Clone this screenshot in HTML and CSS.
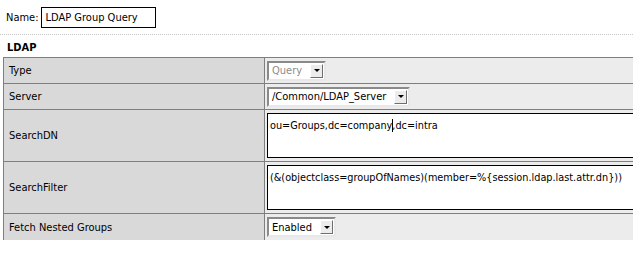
FILE: index.html
```html
<!DOCTYPE html>
<html>
<head>
<meta charset="utf-8">
<link rel="stylesheet" href="styles.css">
</head>
<body>
<div class="name-row">
  <span class="name-label">Name:</span>
  <span class="name-input">LDAP Group Query</span>
</div>
<div class="sep"></div>
<div class="section-title">LDAP</div>
<table class="props">
  <tr class="row-short">
    <td class="label">Type</td>
    <td class="value">
      <span class="select disabled"><span class="select-text">Query</span><span class="select-btn"><span class="arrow"></span></span></span>
    </td>
  </tr>
  <tr class="row-short">
    <td class="label">Server</td>
    <td class="value">
      <span class="select"><span class="select-text">/Common/LDAP_Server</span><span class="select-btn"><span class="arrow"></span></span></span>
    </td>
  </tr>
  <tr class="row-tall">
    <td class="label">SearchDN</td>
    <td class="value">
      <div class="textarea">ou=Groups,dc=company<span class="caret"></span>,dc=intra</div>
    </td>
  </tr>
  <tr class="row-tall">
    <td class="label">SearchFilter</td>
    <td class="value">
      <div class="textarea">(&amp;(objectclass=groupOfNames)(member=%{session.ldap.last.attr.dn}))</div>
    </td>
  </tr>
  <tr class="row-last">
    <td class="label">Fetch Nested Groups</td>
    <td class="value">
      <span class="select"><span class="select-text">Enabled</span><span class="select-btn"><span class="arrow"></span></span></span>
    </td>
  </tr>
</table>
</body>
</html>
```

FILE: styles.css
```css
html, body {
  margin: 0;
  padding: 0;
  background: #ffffff;
  overflow: hidden;
}
body {
  font-family: "DejaVu Sans Condensed", "DejaVu Sans", Verdana, sans-serif;
  font-stretch: condensed;
  font-size: 11px;
  color: #000;
  width: 633px;
  height: 259px;
}
.name-row {
  display: flex;
  align-items: center;
  padding: 7px 0 0 6px;
  height: 21px;
}
.name-label {
  margin-right: 2px;
}
.name-input {
  box-sizing: border-box;
  width: 115px;
  height: 21px;
  border: 1px solid #000;
  display: flex;
  align-items: center;
  padding-left: 4px;
  white-space: nowrap;
}
.sep {
  margin-top: 6px;
  border-top: 1px dotted #c8c8c8;
}
.section-title {
  font-weight: bold;
  padding: 6px 0 0 7px;
  height: 16px;
}
.props {
  margin-left: 3px;
  border-collapse: collapse;
  width: 680px;
  table-layout: fixed;
}
.props td {
  padding: 0;
  border: 1px solid #7f7f7f;
}
.props td.label {
  width: 255px;
  background: #d9d9d9;
  padding-left: 5px;
  vertical-align: middle;
}
.props td.value {
  background: #ececec;
  padding-left: 2px;
  vertical-align: middle;
}
.row-short td {
  height: 25px;
}
.row-tall td {
  height: 51px;
}
.row-last td {
  height: 26px;
}
.props tr.row-last td {
  border-bottom: none;
}
.select {
  box-sizing: border-box;
  display: inline-flex;
  align-items: center;
  height: 20px;
  background: #fff;
  border-top: 2px solid #8a8a8a;
  border-left: 2px solid #8a8a8a;
  border-right: 2px solid #e8e8e8;
  border-bottom: 2px solid #e8e8e8;
  padding-left: 3px;
  vertical-align: middle;
}
.select.disabled .select-text {
  color: #8c8c8c;
}
.select-text {
  margin-right: 8px;
  white-space: nowrap;
}
.select-btn {
  box-sizing: border-box;
  width: 13px;
  height: 14px;
  background: #ececec;
  border-top: 1px solid #fff;
  border-left: 1px solid #fff;
  border-right: 1px solid #6f6f6f;
  border-bottom: 1px solid #6f6f6f;
  display: flex;
  align-items: center;
  justify-content: center;
  margin-right: 1px;
}
.arrow {
  width: 0;
  height: 0;
  border-left: 3px solid transparent;
  border-right: 3px solid transparent;
  border-top: 3px solid #000;
}
.textarea {
  box-sizing: border-box;
  width: 400px;
  height: 45px;
  background: #fff;
  border: 1px solid #000;
  padding: 5px 0 0 2px;
  white-space: nowrap;
  font-size: 10.8px;
}
.caret {
  display: inline-block;
  width: 1px;
  height: 13px;
  background: #000;
  vertical-align: -3px;
  margin: 0 -1px 0 0;
}
```
